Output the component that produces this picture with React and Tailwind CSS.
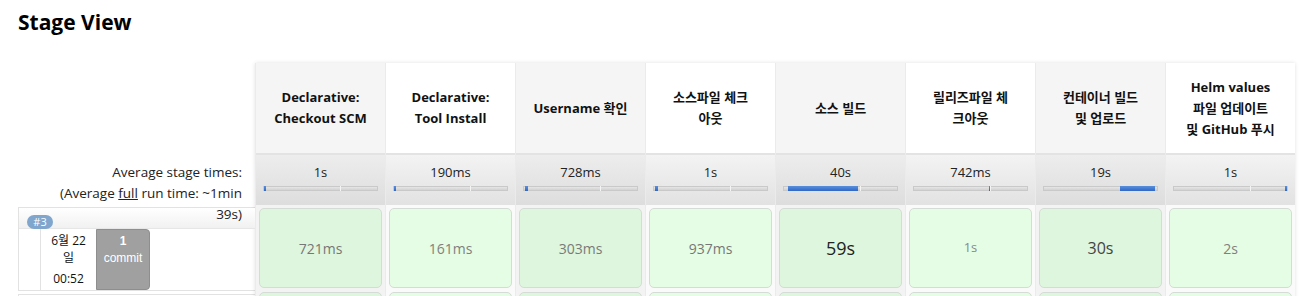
import React from "react";

const stages = [
  { name: ["Declarative:", "Checkout SCM"], avg: "1s", bar: [0, 2], dur: "721ms", size: "text-[14px]", color: "text-[#777]" },
  { name: ["Declarative:", "Tool Install"], avg: "190ms", bar: [0, 2], dur: "161ms", size: "text-[14px]", color: "text-[#808080]" },
  { name: ["Username 확인"], avg: "728ms", bar: [1, 3], dur: "303ms", size: "text-[14px]", color: "text-[#7a7a7a]" },
  { name: ["소스파일 체크", "아웃"], avg: "1s", bar: [1, 3], dur: "937ms", size: "text-[14px]", color: "text-[#777]" },
  { name: ["소스 빌드"], avg: "40s", bar: [4, 70], dur: "59s", size: "text-[18px]", color: "text-[#222]" },
  { name: ["릴리즈파일 체", "크아웃"], avg: "742ms", bar: [75, 1], dur: "1s", size: "text-[13px]", color: "text-[#888]" },
  { name: ["컨테이너 빌드", "및 업로드"], avg: "19s", bar: [76, 35], dur: "30s", size: "text-[16px]", color: "text-[#444]" },
  { name: ["Helm values", "파일 업데이트", "및 GitHub 푸시"], avg: "1s", bar: [111, 2], dur: "2s", size: "text-[14px]", color: "text-[#808080]" },
];

function StageCol({ s, odd }) {
  return (
    <div className="flex w-[130px] flex-col border-l border-[#ebebeb]">
      <div
        className={`flex h-[92px] flex-col items-center justify-center border-b-2 border-[#e3e3e3] text-center text-[13px] font-bold leading-[21px] text-[#111] whitespace-nowrap ${
          odd ? "bg-[#f5f5f5]" : "bg-white"
        }`}
      >
        {s.name.map((l, i) => (
          <div key={i}>{l}</div>
        ))}
      </div>
      <div
        className={`h-[50px] bg-gradient-to-b pt-[7px] ${
          odd ? "from-[#ededed] to-[#dddddd]" : "from-[#f3f3f3] to-[#e2e2e2]"
        }`}
      >
        <div className="text-center text-[13px] leading-[20px] text-[#222]">{s.avg}</div>
        <div className="relative mx-[7px] mt-[4px] h-[5px] border border-[#c9c9c9] bg-gradient-to-b from-[#e6e6e6] to-[#d2d2d2]">
          <div className="absolute top-[-1px] left-[76px] h-[5px] w-[1px] bg-[#f4f4f4]" />
          <div
            className="absolute top-[-1px] h-[5px] bg-gradient-to-b from-[#5b8fdc] to-[#2f67c4]"
            style={{ left: `${s.bar[0]}px`, width: `${s.bar[1]}px` }}
          />
        </div>
      </div>
      <div className={`h-[86px] px-[3px] pt-[3px] pb-[3px] ${odd ? "bg-[#f3f3f3]" : "bg-[#fafafa]"}`}>
        <div
          className={`flex h-full items-center justify-center rounded-[5px] border border-[#d5dcd5] ${
            odd ? "bg-[#ddf6dd]" : "bg-[#e4fde4]"
          } ${s.size} ${s.color}`}
        >
          {s.dur}
        </div>
      </div>
      <div className={`h-[40px] px-[3px] pt-[1px] ${odd ? "bg-[#f3f3f3]" : "bg-[#fafafa]"}`}>
        <div className={`h-full rounded-[5px] border border-[#d5dcd5] ${odd ? "bg-[#ddf6dd]" : "bg-[#e4fde4]"}`} />
      </div>
    </div>
  );
}

export default function App() {
  return (
    <div className="h-[296px] w-[1307px] overflow-hidden bg-white font-['Open_Sans','Noto_Sans_CJK_KR',sans-serif] text-[#333]">
      <h2 className="pl-[18px] pt-[8px] text-[21px] font-bold leading-[28px] text-black">Stage View</h2>
      <div className="mt-[27px] flex pl-[18px]">
        <div className="flex w-[237px] flex-col">
          <div className="h-[92px]" />
          <div className="relative z-10 h-[52px] pt-[7px] pr-[13px] text-right text-[13.5px] leading-[21px] text-[#222]">
            <div>Average stage times:</div>
            <div>
              (Average <span className="underline">full</span> run time: ~1min
            </div>
            <div>39s)</div>
          </div>
          <div className="border-t border-l border-[#e2e2e2]">
            <div className="relative h-[21px] border-b border-[#e6e6e6] bg-gradient-to-b from-white to-[#f1f1f1]">
              <span className="absolute top-[7px] left-[8px] flex h-[14px] w-[26px] items-center justify-center rounded-full bg-[#80a6cd] text-[11px] leading-[14px] text-white">
                #3
              </span>
            </div>
            <div className="flex h-[62px] border-b border-[#e2e2e2]">
              <div className="w-[22px] border-r border-[#e2e2e2]" />
              <div className="w-[55px] pt-[3px] text-center text-[12px] leading-[17px] text-[#111]">
                <div>6월 22</div>
                <div>일</div>
                <div className="mt-[4px]">00:52</div>
              </div>
              <div className="w-[54px] rounded-tr-[4px] rounded-br-[4px] border border-[#8e8e8e] bg-[#a0a0a0] pt-[3px] text-center font-['Liberation_Sans',sans-serif] text-[12px] leading-[17px] text-white">
                <div className="font-bold">1</div>
                <div>commit</div>
              </div>
            </div>
          </div>
          <div className="mt-[3px] h-[20px] border-t border-l border-[#e2e2e2]" />
        </div>
        <div className="flex shadow-[0_0_4px_rgba(0,0,0,0.12)]">
          {stages.map((s, i) => (
            <StageCol key={i} s={s} odd={i % 2 === 0} />
          ))}
        </div>
      </div>
    </div>
  );
}
